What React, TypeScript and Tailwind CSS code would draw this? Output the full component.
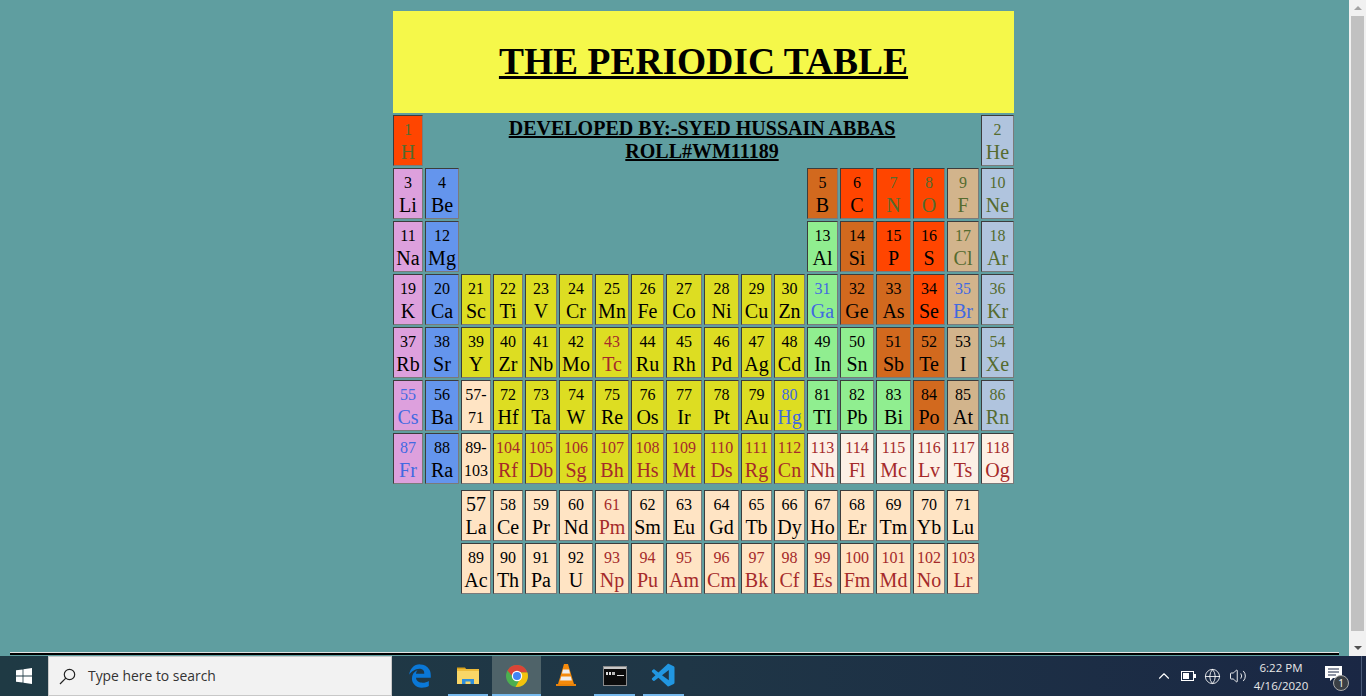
import React from 'react';
import { ChevronUp, Globe, Volume2 } from 'lucide-react';
import { FaEdgeLegacy } from 'react-icons/fa';
import { VscVscode } from 'react-icons/vsc';

type Cell = { n: string; s?: string; bg: string; text?: string; big?: boolean };

const ALKALI = 'bg-[#dda0dd]';
const ALKALINE = 'bg-[#6495ed]';
const TRANS = 'bg-[#dddd22]';
const POST = 'bg-[#90ee90]';
const METALLOID = 'bg-[#d2691e]';
const NONMETAL = 'bg-[#ff4500]';
const HALOGEN = 'bg-[#d2b48c]';
const NOBLE = 'bg-[#b0c4de]';
const RARE = 'bg-[#ffe4c4]';
const UNKNOWN = 'bg-[#fdf0e6]';

const GAS = 'text-[#556b2f]';
const LIQUID = 'text-[#4169e1]';
const SYNTH = 'text-[#a52a2a]';

const c = (n: string, s: string, bg: string, text?: string): Cell => ({ n, s, bg, text });

const row2 = [c('3', 'Li', ALKALI), c('4', 'Be', ALKALINE)];
const row2End = [
  c('5', 'B', METALLOID),
  c('6', 'C', NONMETAL),
  c('7', 'N', NONMETAL, GAS),
  c('8', 'O', NONMETAL, GAS),
  c('9', 'F', HALOGEN, GAS),
  c('10', 'Ne', NOBLE, GAS),
];
const row3 = [c('11', 'Na', ALKALI), c('12', 'Mg', ALKALINE)];
const row3End = [
  c('13', 'Al', POST),
  c('14', 'Si', METALLOID),
  c('15', 'P', NONMETAL),
  c('16', 'S', NONMETAL),
  c('17', 'Cl', HALOGEN, GAS),
  c('18', 'Ar', NOBLE, GAS),
];
const rest: Cell[] = [
  c('19', 'K', ALKALI), c('20', 'Ca', ALKALINE), c('21', 'Sc', TRANS), c('22', 'Ti', TRANS), c('23', 'V', TRANS),
  c('24', 'Cr', TRANS), c('25', 'Mn', TRANS), c('26', 'Fe', TRANS), c('27', 'Co', TRANS), c('28', 'Ni', TRANS),
  c('29', 'Cu', TRANS), c('30', 'Zn', TRANS), c('31', 'Ga', POST, LIQUID), c('32', 'Ge', METALLOID),
  c('33', 'As', METALLOID), c('34', 'Se', NONMETAL), c('35', 'Br', HALOGEN, LIQUID), c('36', 'Kr', NOBLE, GAS),

  c('37', 'Rb', ALKALI), c('38', 'Sr', ALKALINE), c('39', 'Y', TRANS), c('40', 'Zr', TRANS), c('41', 'Nb', TRANS),
  c('42', 'Mo', TRANS), c('43', 'Tc', TRANS, SYNTH), c('44', 'Ru', TRANS), c('45', 'Rh', TRANS), c('46', 'Pd', TRANS),
  c('47', 'Ag', TRANS), c('48', 'Cd', TRANS), c('49', 'In', POST), c('50', 'Sn', POST), c('51', 'Sb', METALLOID),
  c('52', 'Te', METALLOID), c('53', 'I', HALOGEN), c('54', 'Xe', NOBLE, GAS),

  c('55', 'Cs', ALKALI, LIQUID), c('56', 'Ba', ALKALINE), c('57-', '71', RARE), c('72', 'Hf', TRANS), c('73', 'Ta', TRANS),
  c('74', 'W', TRANS), c('75', 'Re', TRANS), c('76', 'Os', TRANS), c('77', 'Ir', TRANS), c('78', 'Pt', TRANS),
  c('79', 'Au', TRANS), c('80', 'Hg', TRANS, LIQUID), c('81', 'TI', POST), c('82', 'Pb', POST), c('83', 'Bi', POST),
  c('84', 'Po', METALLOID), c('85', 'At', HALOGEN), c('86', 'Rn', NOBLE, GAS),

  c('87', 'Fr', ALKALI, LIQUID), c('88', 'Ra', ALKALINE), c('89-', '103', RARE), c('104', 'Rf', TRANS, SYNTH),
  c('105', 'Db', TRANS, SYNTH), c('106', 'Sg', TRANS, SYNTH), c('107', 'Bh', TRANS, SYNTH), c('108', 'Hs', TRANS, SYNTH),
  c('109', 'Mt', TRANS, SYNTH), c('110', 'Ds', TRANS, SYNTH), c('111', 'Rg', TRANS, SYNTH), c('112', 'Cn', TRANS, SYNTH),
  c('113', 'Nh', UNKNOWN, SYNTH), c('114', 'Fl', UNKNOWN, SYNTH), c('115', 'Mc', UNKNOWN, SYNTH),
  c('116', 'Lv', UNKNOWN, SYNTH), c('117', 'Ts', UNKNOWN, SYNTH), c('118', 'Og', UNKNOWN, SYNTH),
];

const lanthanides: Cell[] = [
  { n: '57', s: 'La', bg: RARE, big: true }, c('58', 'Ce', RARE), c('59', 'Pr', RARE), c('60', 'Nd', RARE),
  c('61', 'Pm', RARE, SYNTH), c('62', 'Sm', RARE), c('63', 'Eu', RARE), c('64', 'Gd', RARE), c('65', 'Tb', RARE),
  c('66', 'Dy', RARE), c('67', 'Ho', RARE), c('68', 'Er', RARE), c('69', 'Tm', RARE), c('70', 'Yb', RARE), c('71', 'Lu', RARE),
];
const actinides: Cell[] = [
  c('89', 'Ac', RARE), c('90', 'Th', RARE), c('91', 'Pa', RARE), c('92', 'U', RARE), c('93', 'Np', RARE, SYNTH),
  c('94', 'Pu', RARE, SYNTH), c('95', 'Am', RARE, SYNTH), c('96', 'Cm', RARE, SYNTH), c('97', 'Bk', RARE, SYNTH),
  c('98', 'Cf', RARE, SYNTH), c('99', 'Es', RARE, SYNTH), c('100', 'Fm', RARE, SYNTH), c('101', 'Md', RARE, SYNTH),
  c('102', 'No', RARE, SYNTH), c('103', 'Lr', RARE, SYNTH),
];

const GRID =
  'grid grid-cols-[30px_34px_30px_30px_32px_34px_34px_33px_36px_35px_31px_31px_31px_34px_35px_32px_32px_33px] gap-[2px] auto-rows-[51px]';

const Element = ({ cell }: { cell: Cell }) => (
  <div
    className={`${cell.bg} ${cell.text ?? 'text-black'} flex flex-col items-center justify-center border border-t-[#3c3c3c] border-l-[#3c3c3c] border-r-[#7a7a7a] border-b-[#7a7a7a]`}
  >
    <span className={`${cell.big ? 'text-[20px]' : 'text-[16px]'} leading-[23px]`}>{cell.n}</span>
    <span className={`${cell.n.endsWith('-') ? 'text-[16px]' : 'text-[20px]'} leading-[23px]`}>{cell.s}</span>
  </div>
);

const WindowsLogo = () => (
  <svg width="16" height="16" viewBox="0 0 16 16" fill="#fff">
    <path d="M0 2.3 6.6 1.4V7.6H0ZM7.4 1.3 16 0V7.6H7.4ZM0 8.4H6.6V14.6L0 13.7ZM7.4 8.4H16V16L7.4 14.7Z" />
  </svg>
);

const SearchGlyph = () => (
  <svg width="17" height="17" viewBox="0 0 17 17" fill="none" stroke="#222" strokeWidth="1.2">
    <circle cx="10.5" cy="6.5" r="5.2" />
    <path d="M6.8 10.2 1 16" />
  </svg>
);

const FolderIcon = () => (
  <svg width="22" height="20" viewBox="0 0 22 20">
    <path d="M0 1.5h8l2 2.5H0Z" fill="#d9a21b" />
    <rect x="0" y="3" width="22" height="15" fill="#f9d667" />
    <rect x="0" y="3" width="22" height="2" fill="#eebc3a" />
    <path d="M5 18v-5h12v5h-3.5v-2.5h-5V18Z" fill="#2f8fdc" />
  </svg>
);

const ChromeIcon = () => (
  <svg width="24" height="24" viewBox="0 0 24 24">
    <circle cx="12" cy="12" r="11" fill="#4caf50" />
    <path d="M2.5 6.5A11 11 0 0 1 22.4 8.5L12 8.5A4 4 0 0 0 8.3 13.5Z" fill="#db4437" />
    <path d="M22.4 8.5A11 11 0 0 1 10.5 22.9L15.4 14.2 12 8.5Z" fill="#f4c20d" />
    <circle cx="12" cy="12" r="5.2" fill="#fff" />
    <circle cx="12" cy="12" r="4" fill="#4285f4" />
  </svg>
);

const VlcIcon = () => (
  <svg width="20" height="24" viewBox="0 0 20 24">
    <path d="M8 0h4l6 20H2Z" fill="#f58a0b" />
    <path d="M7 5.5h6l1 4H6Z" fill="#eee" />
    <path d="M5.2 12.5h9.6l1.1 4H4.1Z" fill="#eee" />
    <path d="M0 20h20v2H0Z" fill="#e8820a" />
  </svg>
);

const TerminalIcon = () => (
  <svg width="24" height="20" viewBox="0 0 24 20">
    <rect x="0.5" y="0.5" width="23" height="19" fill="#0c0c0c" stroke="#8a8a8a" />
    <rect x="1" y="1" width="22" height="2" fill="#c8c8c8" />
    <rect x="3" y="6" width="2" height="3" fill="#ddd" />
    <rect x="6" y="6" width="2" height="3" fill="#ddd" />
    <rect x="9" y="6" width="3" height="3" fill="#bbb" />
    <rect x="14" y="9" width="7" height="1" fill="#ddd" />
  </svg>
);

const BatteryGlyph = () => (
  <svg width="15" height="10" viewBox="0 0 15 10">
    <rect x="0.5" y="0.5" width="12" height="9" fill="none" stroke="#fff" />
    <rect x="2" y="2" width="6" height="6" fill="#fff" />
    <rect x="13" y="3" width="2" height="4" fill="#fff" />
  </svg>
);

const NotifyGlyph = () => (
  <svg width="17" height="16" viewBox="0 0 17 16" fill="#fff">
    <path d="M0 0h17v12H8l-3 3v-3H0Z" />
    <path d="M3 3h11M3 6h11M3 9h8" stroke="#1a2744" />
  </svg>
);

const TaskItem = ({ children, width, active, line }: { children: React.ReactNode; width: string; active?: boolean; line?: boolean }) => (
  <div className={`${width} ${active ? 'bg-[#4f6369]' : ''} relative flex h-full items-center justify-center`}>
    {children}
    {line && <div className={`absolute bottom-0 h-[2px] bg-[#76b9ed] ${active ? 'inset-x-0' : 'inset-x-[4px]'}`} />}
  </div>
);

export default function App() {
  return (
    <div className="flex h-screen flex-col overflow-hidden bg-[#5f9ea0] font-['Liberation_Serif',serif]">
      <div className="flex min-h-0 flex-1">
        <main className="flex min-w-0 flex-1 flex-col">
          <div className="ml-[393px] flex w-[621px] flex-col pt-[11px]">
            <div className="mb-[2px] flex h-[102px] items-center justify-center bg-[#f5f84a]">
              <h1 className="text-[37.5px] leading-[38px] font-bold text-black underline">THE PERIODIC TABLE</h1>
            </div>
            <div className={GRID}>
              <Element cell={c('1', 'H', NONMETAL, GAS)} />
              <div className="col-span-16 pt-[2px] text-center text-[20px] leading-[23px] font-bold text-black underline">
                DEVELOPED BY:-SYED HUSSAIN ABBAS
                <br />
                ROLL#WM11189
              </div>
              <Element cell={c('2', 'He', NOBLE, GAS)} />

              {row2.map((e) => <Element key={e.n} cell={e} />)}
              <div className="col-span-10" />
              {row2End.map((e) => <Element key={e.n} cell={e} />)}

              {row3.map((e) => <Element key={e.n} cell={e} />)}
              <div className="col-span-10" />
              {row3End.map((e) => <Element key={e.n} cell={e} />)}

              {rest.map((e) => <Element key={e.n} cell={e} />)}
            </div>
            <div className={`${GRID} mt-[6px]`}>
              <div className="col-span-2" />
              {lanthanides.map((e) => <Element key={e.n} cell={e} />)}
              <div />
              <div className="col-span-2" />
              {actinides.map((e) => <Element key={e.n} cell={e} />)}
              <div />
            </div>
          </div>
          <div className="mt-auto mr-[10px] mb-[1px] ml-[10px] h-[3px] border-t border-t-[#e4e4e4] bg-black" />
        </main>
        <aside className="flex w-[17px] flex-col items-center bg-[#f1f1f1] px-[2px]">
          <div className="flex h-[16px] items-center justify-center">
            <div className="h-0 w-0 border-x-[4px] border-b-[4px] border-x-transparent border-b-[#a3a3a3]" />
          </div>
          <div className="w-full flex-1 bg-[#c1c1c1]" />
          <div className="h-[8px]" />
          <div className="flex h-[17px] items-center justify-center">
            <div className="h-0 w-0 border-x-[4px] border-t-[4px] border-x-transparent border-t-[#505050]" />
          </div>
        </aside>
      </div>

      <footer className="flex h-[40px] shrink-0 items-center bg-gradient-to-r from-[#1f3a44] via-[#1f3646] to-[#1a2744] font-['Open_Sans',sans-serif]">
        <div className="flex h-full w-[48px] items-center justify-center">
          <WindowsLogo />
        </div>
        <div className="flex h-full w-[344px] items-center gap-[12px] border border-[#c8c8c8] bg-[#f2f2f2] pl-[10px] text-[13.9px] text-[#333]">
          <SearchGlyph />
          <span>Type here to search</span>
        </div>
        <div className="flex h-full items-center pl-[4px]">
          <TaskItem width="w-[48px]"><FaEdgeLegacy className="text-[#0a78d7]" size={24} /></TaskItem>
          <TaskItem width="w-[48px]" line><FolderIcon /></TaskItem>
          <TaskItem width="w-[49px]" active line><ChromeIcon /></TaskItem>
          <TaskItem width="w-[49px]"><VlcIcon /></TaskItem>
          <TaskItem width="w-[49px]" line><TerminalIcon /></TaskItem>
          <TaskItem width="w-[49px]" line><VscVscode className="text-[#2196e0]" size={28} /></TaskItem>
        </div>
        <div className="ml-auto flex h-full items-center text-white">
          <div className="flex items-center gap-[8px] pr-[1px]">
            <ChevronUp size={18} strokeWidth={1.5} />
            <BatteryGlyph />
            <Globe size={17} strokeWidth={1.2} />
            <Volume2 size={18} strokeWidth={1.2} />
          </div>
          <div className="flex w-[66px] flex-col items-center pt-[2px] text-[11.5px] leading-[18px] text-[#e8e8e8]">
            <span>6:22 PM</span>
            <span>4/16/2020</span>
          </div>
          <div className="relative ml-[11px] flex h-full w-[41px] items-center justify-start">
            <div className="mb-[4px]"><NotifyGlyph /></div>
            <span className="absolute top-[19px] left-[8px] flex h-[16px] w-[16px] items-center justify-center rounded-full border border-[#aaa] bg-[#3a3f45] text-[10px] leading-none">1</span>
            <div className="absolute top-0 right-[4px] bottom-0 w-px bg-[#4a5a78]" />
          </div>
        </div>
      </footer>
    </div>
  );
}
